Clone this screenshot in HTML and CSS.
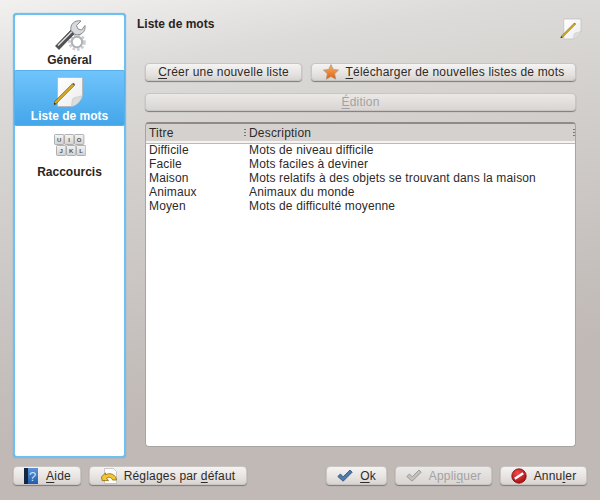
FILE: index.html
```html
<!DOCTYPE html>
<html lang="fr">
<head>
<meta charset="utf-8">
<title>Liste de mots</title>
<link rel="stylesheet" href="styles.css">
</head>
<body>
<svg class="defs" width="0" height="0">
  <defs>
    <linearGradient id="pg" x1="0" y1="0" x2="1" y2="1"><stop offset="0" stop-color="#fff"/><stop offset="1" stop-color="#ececec"/></linearGradient>
    <linearGradient id="star" x1="0" y1="0" x2="0" y2="1"><stop offset="0" stop-color="#f8b468"/><stop offset="1" stop-color="#dc5f10"/></linearGradient>
    <linearGradient id="book" x1="0" y1="0" x2="0" y2="1"><stop offset="0" stop-color="#5f95d8"/><stop offset="1" stop-color="#1e5cb0"/></linearGradient>
    <linearGradient id="key" x1="0" y1="0" x2="0" y2="1"><stop offset="0" stop-color="#f4f4f4"/><stop offset="1" stop-color="#d2d2d2"/></linearGradient>
    <radialGradient id="red" cx=".4" cy=".3" r=".8"><stop offset="0" stop-color="#f04a4a"/><stop offset="1" stop-color="#a00a0a"/></radialGradient>
    <symbol id="note" viewBox="0 0 32 32">
      <path d="M5.5 1.5H30.5V19.5L19.5 30.5H5.5Z" fill="url(#pg)" stroke="#b4b4b4" stroke-width=".8"/>
      <path d="M19.5 30.5C20 27 20 23 21.5 22C24 21 27 21 30.5 19.5C29 25 25 29.5 19.5 30.5Z" fill="#dcdcdc" stroke="#c2c2c2" stroke-width=".6"/>
      <path d="M1 29L2.4 25.8L20.4 7.8L22.2 9.6L4.2 27.6Z" fill="#d9ad22" stroke="#4a3d10" stroke-width=".6"/>
      <path d="M1 29L2 26.4L3.8 28Z" fill="#222"/>
      <path d="M20.4 7.8L21.4 6.8L23.2 8.6L22.2 9.6Z" fill="#5c5c5c"/>
    </symbol>
  </defs>
</svg>
<div class="dialog">
  <div class="body">
    <nav class="sidebar">
      <div class="side-item side-general">
        <svg class="i32" viewBox="0 0 32 32">
          <circle cx="23" cy="23" r="7" fill="none" stroke="#ccced3" stroke-width="3.6" stroke-dasharray="2.6 1.6"/>
          <circle cx="23" cy="23" r="5.2" fill="none" stroke="#aeb2b9" stroke-width="2"/>
          <path d="M1.5 27L17.5 10.5L21 14L5 30.5Z" fill="#505053" stroke="#2a2a2c" stroke-width=".6"/>
          <path d="M4 26.5L18 12.5" stroke="#e2e2e6" stroke-width="1.4"/>
          <path d="M17 11.5C15.5 5.5 21 .5 27 2L22.5 6.5L24 10L27.5 11L31 6.5C32 12.5 27 17 21 15.5Z" fill="#d8dadd" stroke="#727479" stroke-width=".8"/>
        </svg>
        <span>Général</span>
      </div>
      <div class="side-item side-active">
        <svg class="i32" viewBox="2 0 32 32"><use href="#note" width="32" height="32"/></svg>
        <span>Liste de mots</span>
      </div>
      <div class="side-item side-keys">
        <svg class="keys" viewBox="0 0 32 22">
          <g fill="url(#key)" stroke="#a0a0a0" stroke-width=".8">
            <rect x=".5" y=".5" width="9.4" height="10" rx="1"/><rect x="10.5" y=".5" width="9.4" height="10" rx="1"/><rect x="20.5" y=".5" width="9.4" height="10" rx="1"/>
            <rect x="2.5" y="11.5" width="9.4" height="10" rx="1"/><rect x="12.5" y="11.5" width="9.4" height="10" rx="1"/><rect x="22.5" y="11.5" width="9.4" height="10" rx="1"/>
          </g>
          <g class="key-text">
            <text x="5.2" y="8">U</text><text x="15.2" y="8">I</text><text x="25.2" y="8">O</text>
            <text x="7.2" y="19">J</text><text x="17.2" y="19">K</text><text x="27.2" y="19">L</text>
          </g>
        </svg>
        <span>Raccourcis</span>
      </div>
    </nav>
    <main class="content">
      <header class="page-head">
        <h1>Liste de mots</h1>
        <svg class="i22" viewBox="0 0 32 32"><use href="#note" width="32" height="32"/></svg>
      </header>
      <div class="panel">
        <div class="row">
          <button class="btn btn-new"><span><u>C</u>réer une nouvelle liste</span></button>
          <button class="btn btn-dl">
            <svg class="i16" viewBox="0 0 16 16"><path d="M8 .6L10.3 5.4L15.6 6.1L11.7 9.8L12.7 15.2L8 12.6L3.3 15.2L4.3 9.8L.4 6.1L5.7 5.4Z" fill="url(#star)" stroke="#a89684" stroke-width=".7"/></svg>
            <span><u>T</u>élécharger de nouvelles listes de mots</span>
          </button>
        </div>
        <button class="btn btn-edit" disabled><span><u>É</u>dition</span></button>
        <div class="table">
          <div class="thead">
            <div class="th th-title">Titre<i class="grip"></i></div>
            <div class="th th-desc">Description<i class="grip"></i></div>
          </div>
          <div class="tbody">
            <div class="tr"><span>Difficile</span><span>Mots de niveau difficile</span></div>
            <div class="tr"><span>Facile</span><span>Mots faciles à deviner</span></div>
            <div class="tr"><span>Maison</span><span>Mots relatifs à des objets se trouvant dans la maison</span></div>
            <div class="tr"><span>Animaux</span><span>Animaux du monde</span></div>
            <div class="tr"><span>Moyen</span><span>Mots de difficulté moyenne</span></div>
          </div>
        </div>
      </div>
    </main>
  </div>
  <footer class="footer">
    <button class="btn btn-help">
      <svg class="i16" viewBox="0 0 16 16"><rect x="1" y="0" width="14" height="16" fill="url(#book)"/><rect x="1" y="0" width="4" height="16" fill="#16263e"/><text x="9.6" y="13" class="qm">?</text></svg>
      <span><u>A</u>ide</span>
    </button>
    <button class="btn btn-def">
      <svg class="i16" viewBox="0 0 16 16">
        <path d="M3.5 .5H12.5L15.5 3.5V15.5H3.5Z" fill="#fbfbfb" stroke="#bcbcbc" stroke-width=".8"/>
        <path d="M.5 9L4.5 4.8V6.8C9 4.4 14.5 6 15.5 12H11.5C11 9.6 8 8.4 5.5 10L7.5 12.6H1.2Z" fill="#f4c72c" stroke="#8a6610" stroke-width=".8"/>
      </svg>
      <span>Réglages par <u>d</u>éfaut</span>
    </button>
    <span class="spacer"></span>
    <button class="btn btn-ok">
      <svg class="i16" viewBox="0 0 16 16"><path d="M.8 8.5L3.4 6L6.2 8.8L13 2L15.2 4.2L6.2 13.2Z" fill="#4d7cab" stroke="#2b4d78" stroke-width=".8"/></svg>
      <span><u>O</u>k</span>
    </button>
    <button class="btn btn-apply" disabled>
      <svg class="i16" viewBox="0 0 16 16"><path d="M.8 8.5L3.4 6L6.2 8.8L13 2L15.2 4.2L6.2 13.2Z" fill="#c4c0bd" stroke="#928e8b" stroke-width=".8"/></svg>
      <span>Appli<u>q</u>uer</span>
    </button>
    <button class="btn btn-cancel">
      <svg class="i16" viewBox="0 0 16 16"><circle cx="8" cy="8" r="7.2" fill="url(#red)" stroke="#760808" stroke-width=".8"/><path d="M3.8 10.8L12.2 5.2" stroke="#fff" stroke-width="2.4"/></svg>
      <span>Annu<u>l</u>er</span>
    </button>
  </footer>
</div>
</body>
</html>
```
FILE: styles.css
```css
* { box-sizing: border-box; }
html, body { margin: 0; width: 600px; height: 500px; overflow: hidden; }
body {
  font-family: "Liberation Sans", Arial, sans-serif;
  font-size: 12px;
  color: #2e2a28;
  background: #c0b9b6;
}
u { text-underline-offset: 2px; }
.defs { position: absolute; }
.dialog {
  width: 600px;
  height: 500px;
  padding: 13px 13px 15px 13px;
  display: flex;
  flex-direction: column;
  background: linear-gradient(170deg, #f2f1f0 0, #dddbd9 90px, #d2cfcc 200px, #c0b9b6 440px);
}
.body { display: flex; height: 445px; gap: 11px; }
.sidebar {
  width: 113px;
  flex: none;
  background: #fff;
  border: 2px solid #6fc0f2;
  border-radius: 4px;
  box-shadow: 0 0 1px #3f9fe0;
  display: flex;
  flex-direction: column;
}
.side-item {
  display: flex;
  flex-direction: column;
  align-items: center;
  font-size: 12px;
  font-weight: bold;
  color: #2a2422;
}
.side-item span { line-height: 15px; }
.side-general { height: 55px; padding-top: 4px; }
.side-general span { margin-top: 2px; }
.side-active {
  height: 56px;
  margin: 0 -1px;
  padding-top: 5px;
  color: #fff;
  background: linear-gradient(180deg, #70c4fb 0, #44a6ea 100%);
  border: 1px solid #58b0ea;
  border-radius: 2px;
}
.side-active span { margin-top: 1px; }
.side-keys { padding-top: 8px; }
.side-keys span { margin-top: 9px; }
.key-text text { font-family: "Liberation Sans", sans-serif; font-size: 6px; fill: #555; text-anchor: middle; }
.i32 { width: 32px; height: 32px; display: block; }
.keys { width: 32px; height: 22px; display: block; }
.i22 { width: 22px; height: 22px; display: block; }
.i16 { width: 16px; height: 16px; display: block; flex: none; }
.content { flex: 1; min-width: 0; display: flex; flex-direction: column; }
.page-head {
  height: 50px;
  display: flex;
  justify-content: space-between;
  align-items: flex-start;
}
.page-head h1 {
  margin: 4px 0 0;
  font-size: 12px;
  line-height: 15px;
  font-weight: bold;
  color: #2a2422;
}
.page-head .i22 { margin: 5px 5px 0 0; }
.panel { flex: 1; display: flex; flex-direction: column; padding: 0 11px 11px 8px; min-height: 0; }
.row { display: flex; gap: 9px; }
.btn {
  font: inherit;
  font-size: 12px;
  letter-spacing: .19px;
  color: #2e2a28;
  height: 19px;
  padding: 0;
  display: flex;
  align-items: center;
  justify-content: center;
  gap: 7px;
  white-space: nowrap;
  background: linear-gradient(180deg, #f5f4f3 0, #e6e3e1 60%, #d8d4d2 100%);
  border: 1px solid #c9c5c2;
  border-radius: 4px;
  box-shadow: 0 1px 1px #7f7a77;
}
.btn[disabled] { color: #a5a1a0; background: linear-gradient(180deg, #ebe9e7 0, #d8d5d3 100%); }
.row .btn { height: 18px; }
.btn-new { width: 157px; }
.btn-dl { width: 265px; }
.btn-edit { width: 100%; height: 18px; margin-top: 12px; margin-bottom: 11px; flex: none; }
.table {
  height: 325px;
  flex: none;
  width: 431px;
  border: 1px solid #a8a4a1;
  border-top: 2px solid #8f8b88;
  border-radius: 4px;
  background: #fff;
  display: flex;
  flex-direction: column;
  overflow: hidden;
}
.thead {
  display: flex;
  height: 19px;
  flex: none;
  align-items: center;
  background: #d5d1ce;
  border-bottom: 2px solid #f4f3f2;
  letter-spacing: .19px;
  box-shadow: 0 1px 0 #bdb9b6;
}
.th { position: relative; height: 100%; display: flex; align-items: center; padding-left: 3px; }
.th-title { width: 100px; }
.th-desc { flex: 1; }
.grip {
  position: absolute;
  right: 0;
  top: 5px;
  width: 2px;
  height: 8px;
  background: repeating-linear-gradient(180deg, #7a7674 0 1px, transparent 1px 3px);
}
.tr { display: flex; height: 14px; line-height: 14px; letter-spacing: .14px; }
.tr span { padding-left: 3px; }
.tr span:first-child { width: 100px; flex: none; }
.footer { display: flex; gap: 10px; margin-top: 8px; }
.spacer { flex: 1; }
.btn-help { width: 68px; }
.qm { font-size: 13px; fill: #cfe2f7; text-anchor: middle; font-family: "Liberation Sans", sans-serif; }
.btn-def { width: 158px; margin-left: -2px; }
.btn-ok { width: 61px; }
.btn-apply { width: 97px; margin-left: -2px; }
.btn-cancel { width: 87px; margin-left: -2px; }
```
